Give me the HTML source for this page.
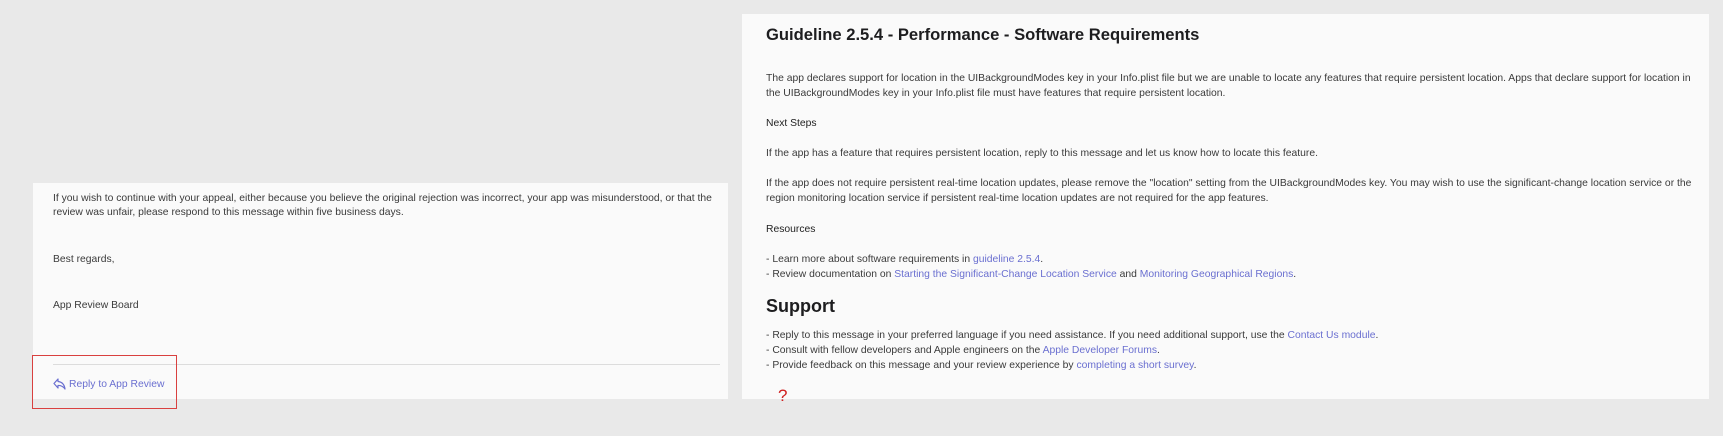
<!DOCTYPE html>
<html><head><meta charset="utf-8"><style>
html,body{margin:0;padding:0}
body{width:1723px;height:436px;background:#e9e9e9;position:relative;overflow:hidden;font-family:"Liberation Sans",sans-serif;color:#3a3a3a}
.p{position:absolute;background:#fafafa}
.t{position:absolute;white-space:nowrap;font-size:10.35px;line-height:14px;margin-top:1px}
a{color:#6a6fd0;text-decoration:none}
.h{position:absolute;white-space:nowrap;font-weight:bold;color:#1d1d1f}
</style></head><body>
<div class="p" style="left:33px;top:183px;width:695px;height:216px"></div>
<div class="p" style="left:742px;top:14px;width:967px;height:385px"></div>

<div class="t" style="left:53px;top:191px">If you wish to continue with your appeal, either because you believe the original rejection was incorrect, your app was misunderstood, or that the</div>
<div class="t" style="left:53px;top:205px">review was unfair, please respond to this message within five business days.</div>
<div class="t" style="left:53px;top:252px">Best regards,</div>
<div class="t" style="left:53px;top:298px">App Review Board</div>
<div style="position:absolute;left:53px;top:364px;width:667px;height:1px;background:#dcdcdc"></div>
<svg style="position:absolute;left:53px;top:378px" width="13" height="12" viewBox="0 0 13 12"><path d="M5 1 L1 5.5 L5 10 L5 7.5 Q9 7 12 11 Q11 4 5 3.5 Z" fill="none" stroke="#6a6fd0" stroke-width="1.2" stroke-linejoin="round"/></svg>
<div class="t" style="left:69px;top:377px;color:#6a6fd0">Reply to App Review</div>
<div style="position:absolute;left:32px;top:355px;width:143px;height:52px;border:1px solid #d9403f"></div>

<div class="h" style="left:766px;top:25px;font-size:16.6px">Guideline 2.5.4 - Performance - Software Requirements</div>
<div class="t" style="left:766px;top:71px">The app declares support for location in the UIBackgroundModes key in your Info.plist file but we are unable to locate any features that require persistent location. Apps that declare support for location in</div>
<div class="t" style="left:766px;top:86px">the UIBackgroundModes key in your Info.plist file must have features that require persistent location.</div>
<div class="t" style="left:766px;top:116px;color:#222">Next Steps</div>
<div class="t" style="left:766px;top:146px">If the app has a feature that requires persistent location, reply to this message and let us know how to locate this feature.</div>
<div class="t" style="left:766px;top:176px">If the app does not require persistent real-time location updates, please remove the "location" setting from the UIBackgroundModes key. You may wish to use the significant-change location service or the</div>
<div class="t" style="left:766px;top:191px">region monitoring location service if persistent real-time location updates are not required for the app features.</div>
<div class="t" style="left:766px;top:222px;color:#222">Resources</div>
<div class="t" style="left:766px;top:252px">- Learn more about software requirements in <a>guideline 2.5.4</a>.</div>
<div class="t" style="left:766px;top:267px">- Review documentation on <a>Starting the Significant-Change Location Service</a> and <a>Monitoring Geographical Regions</a>.</div>
<div class="h" style="left:766px;top:296px;font-size:18px">Support</div>
<div class="t" style="left:766px;top:328px">- Reply to this message in your preferred language if you need assistance. If you need additional support, use the <a>Contact Us module</a>.</div>
<div class="t" style="left:766px;top:343px">- Consult with fellow developers and Apple engineers on the <a>Apple Developer Forums</a>.</div>
<div class="t" style="left:766px;top:358px">- Provide feedback on this message and your review experience by <a>completing a short survey</a>.</div>
<div class="t" style="left:778px;top:385px;color:#d02020;font-size:17px;line-height:20px">?</div>
</body></html>
